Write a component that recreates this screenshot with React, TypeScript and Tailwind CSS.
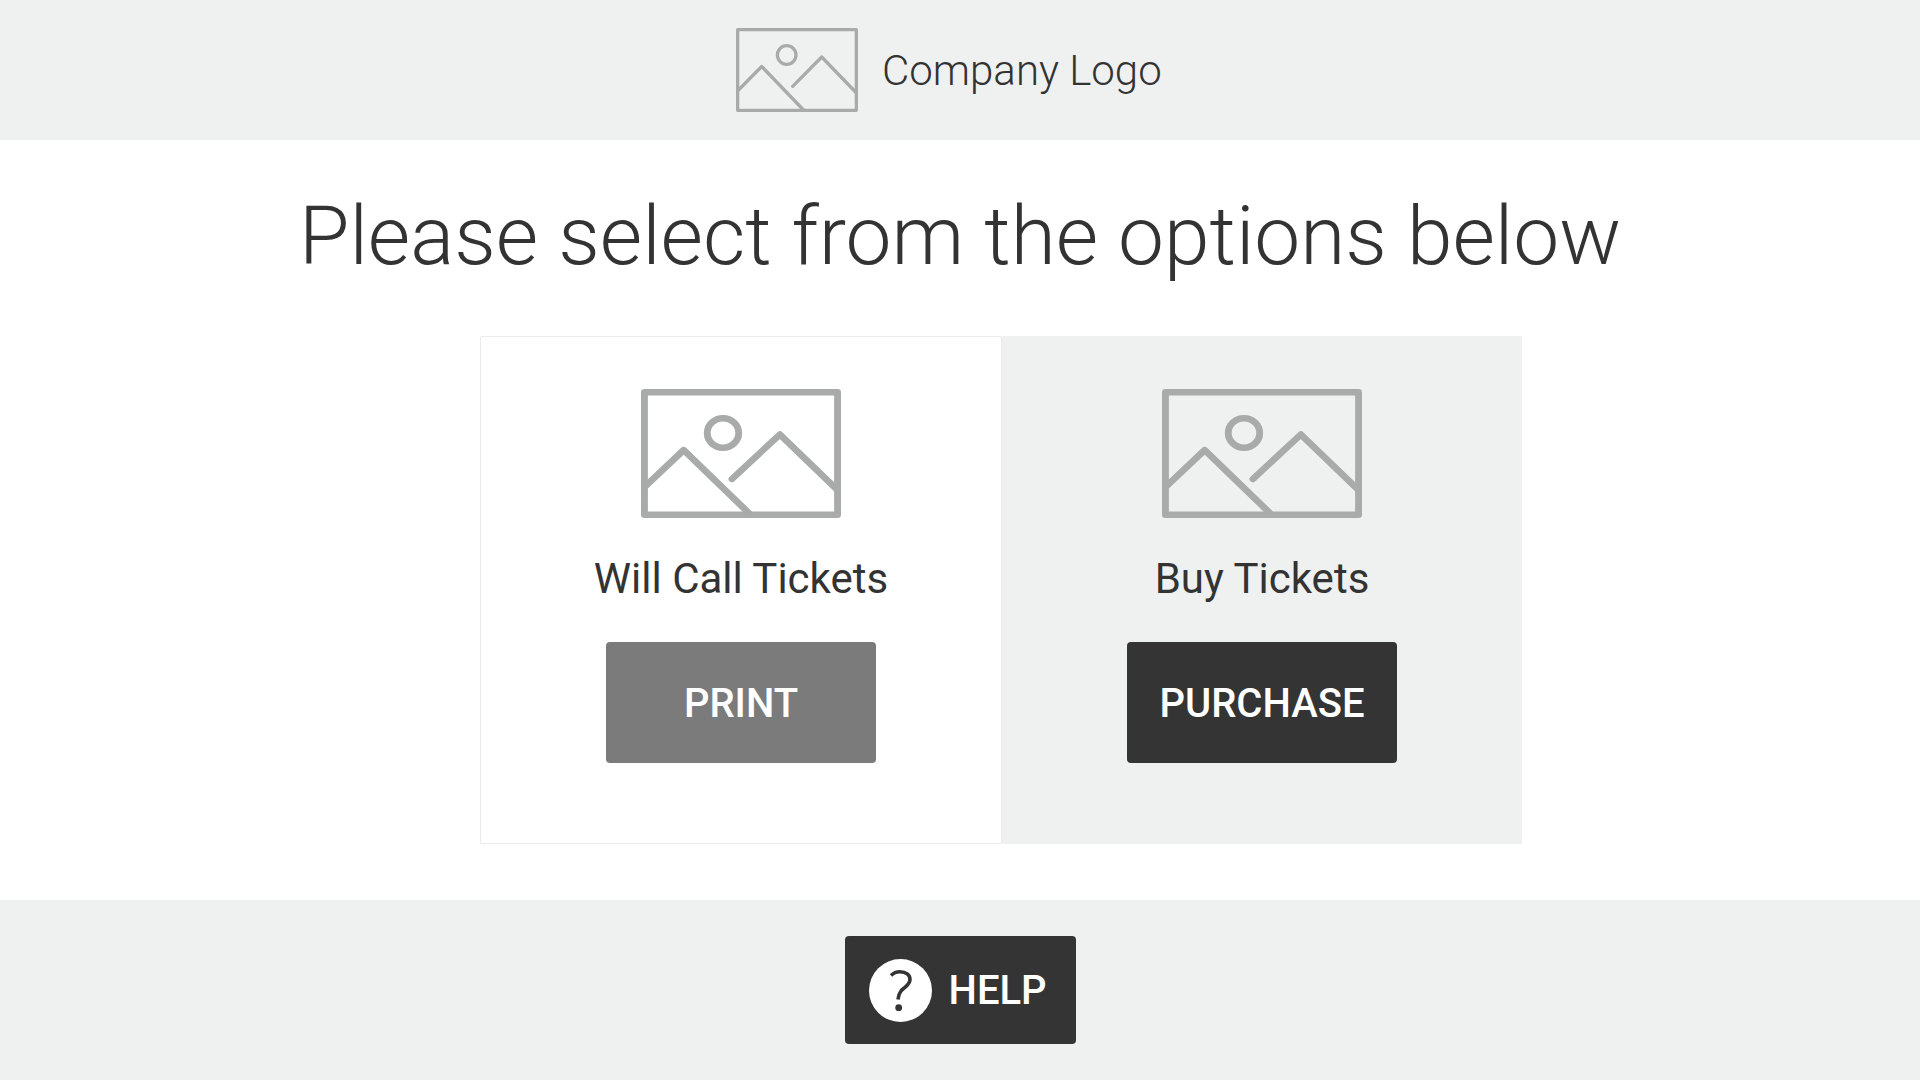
import React from 'react';

const roboto = "font-['Roboto',sans-serif]";

type Shape = { box: string; stroke: number; cx: number; cy: number; r: number; left: string; right: string };

// the logo and the card pictures are not the same proportions in the design
const logoShape: Shape = {
  box: '0 0 122 84',
  stroke: 3.3,
  cx: 50.7,
  cy: 27,
  r: 9.3,
  left: 'M1.5 63 25.7 38.5 67.5 82',
  right: 'M56.7 58.3 85.7 29 120.5 65',
};

const cardShape: Shape = {
  box: '0 0 122 84',
  stroke: 4.2,
  cx: 50,
  cy: 28.6,
  r: 9.6,
  left: 'M2 64 26 39.8 66.5 81.5',
  right: 'M55.5 58.6 84.7 29.6 120 66',
};

const Picture: React.FC<{ className: string; shape: Shape }> = ({ className, shape }) => (
  <svg
    viewBox={shape.box}
    preserveAspectRatio="none"
    className={className}
    fill="none"
    stroke="#a9abab"
    strokeWidth={shape.stroke}
  >
    <rect
      x={shape.stroke / 2}
      y={shape.stroke / 2}
      width={122 - shape.stroke}
      height={84 - shape.stroke}
      strokeLinejoin="round"
    />
    <circle cx={shape.cx} cy={shape.cy} r={shape.r} />
    <path d={shape.left} strokeLinejoin="round" />
    <path d={shape.right} strokeLinecap="round" strokeLinejoin="round" />
  </svg>
);

const HelpIcon: React.FC = () => (
  <svg viewBox="0 0 63 63" className="h-[63px] w-[63px]">
    <circle cx="31.5" cy="31.5" r="31.5" fill="#fff" />
    <path
      d="M22 16.5C25 13.5 28 12.7 31 12.7 37 12.7 41 16 41 20.5 41 26 35 28.5 32 32 30 34.5 29.3 37 29 40.5"
      fill="none"
      stroke="#343434"
      strokeWidth="3.6"
    />
    <circle cx="29.7" cy="48.7" r="3.4" fill="#343434" />
  </svg>
);

const OptionCard: React.FC<{ title: string; action: string; tinted?: boolean }> = ({ title, action, tinted }) => (
  <div
    className={
      tinted
        ? 'flex h-[508px] w-[520px] flex-col items-center bg-[#eff1f0] pt-[53px]'
        : 'flex h-[508px] w-[522px] flex-col items-center rounded-[2px] border border-[#ebebeb] bg-white pt-[52px]'
    }
  >
    <Picture className="h-[129px] w-[200px]" shape={cardShape} />
    <div className="mt-[33px] h-[56px] text-[42px] leading-[56px] text-[#333]">{title}</div>
    <button
      className={
        'mt-[35px] h-[121px] w-[270px] rounded-[4px] pt-[2px] text-[40px] font-medium text-white ' +
        (tinted ? 'bg-[#343434]' : 'bg-[#7b7b7b]')
      }
    >
      {action}
    </button>
  </div>
);

export default function App() {
  return (
    <div className={`flex h-[1080px] w-[1920px] flex-col bg-white ${roboto}`}>
      <header className="flex h-[140px] items-center gap-[24px] bg-[#eff1f0] pl-[736px]">
        <Picture className="h-[84px] w-[122px]" shape={logoShape} />
        <span className="text-[42px] font-light text-[#333]">Company Logo</span>
      </header>

      <main className="flex flex-1 flex-col">
        <h1 className="mt-[40px] mb-[-1px] text-center text-[82px] leading-[112px] font-light text-[#333]">
          Please select from the options below
        </h1>
        <div className="mt-[45px] flex pl-[480px]">
          <OptionCard title="Will Call Tickets" action="PRINT" />
          <OptionCard title="Buy Tickets" action="PURCHASE" tinted />
        </div>
      </main>

      <footer className="flex h-[180px] items-center justify-center bg-[#eff1f0]">
        <button className="flex h-[108px] w-[231px] items-center gap-[17px] rounded-[4px] bg-[#343434] pl-[24px] text-white">
          <HelpIcon />
          <span className="pt-[2px] text-[40px] font-medium">HELP</span>
        </button>
      </footer>
    </div>
  );
}
